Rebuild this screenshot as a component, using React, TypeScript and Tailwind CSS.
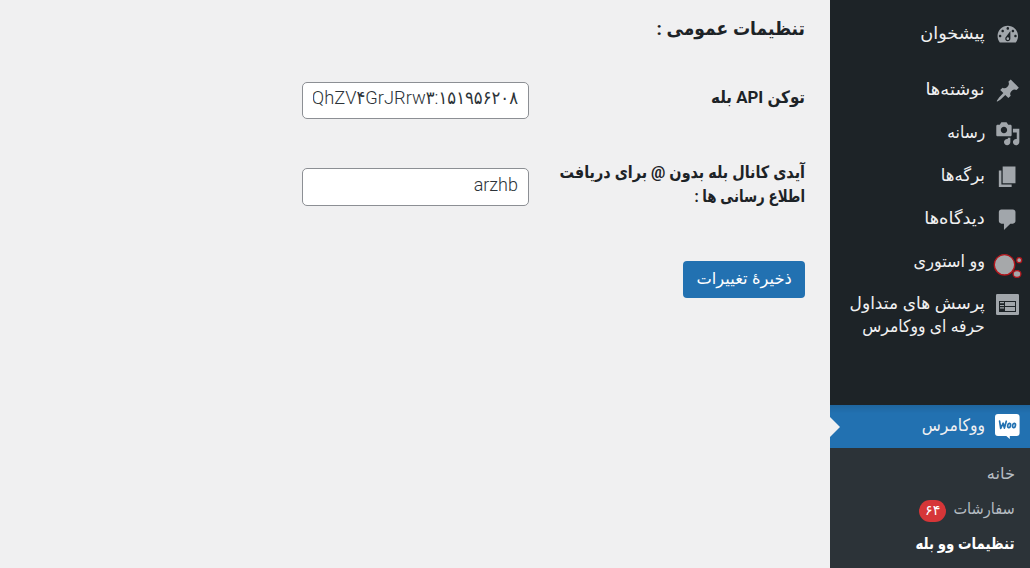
import type { ReactNode } from "react";

const textFont = "font-[Roboto,'DejaVu_Sans_Condensed',sans-serif]";

function Dash({ d }: { d: string }) {
  return (
    <svg viewBox="0 0 20 20" className="size-[25.6px]" fill="#a1a6ab">
      <path d={d} />
    </svg>
  );
}

const DASHBOARD =
  "M3.76 16h12.48c1.1-1.37 1.76-3.11 1.76-5 0-4.42-3.58-8-8-8s-8 3.58-8 8c0 1.89.66 3.63 1.76 5zM10 4c.55 0 1 .45 1 1s-.45 1-1 1-1-.45-1-1 .45-1 1-1zM6 6c.55 0 1 .45 1 1s-.45 1-1 1-1-.45-1-1 .45-1 1-1zm8 0c.55 0 1 .45 1 1s-.45 1-1 1-1-.45-1-1 .45-1 1-1zm-5.37 5.55L12 7v6c0 1.1-.9 2-2 2s-2-.9-2-2c0-.57.24-1.08.63-1.45zM4 10c.55 0 1 .45 1 1s-.45 1-1 1-1-.45-1-1 .45-1 1-1zm12 0c.55 0 1 .45 1 1s-.45 1-1 1-1-.45-1-1 .45-1 1-1zm-5 3c0-.55-.45-1-1-1s-1 .45-1 1 .45 1 1 1 1-.45 1-1z";
const PIN =
  "M10.44 3.02l1.82-1.82 6.36 6.35-1.83 1.82c-1.05-.68-2.48-.57-3.41.36l-.75.75c-.92.93-1.04 2.35-.35 3.41l-1.83 1.82-2.41-2.41-2.8 2.79c-.42.42-3.38 2.71-3.8 2.29s1.86-3.39 2.28-3.81l2.79-2.79L4.1 9.36l1.83-1.82c1.05.69 2.48.57 3.4-.36l.75-.75c.93-.92 1.05-2.35.36-3.41z";
const MEDIA =
  "M13 11V4c0-.55-.45-1-1-1h-1.67L9 1H5L3.67 3H2c-.55 0-1 .45-1 1v7c0 .55.45 1 1 1h10c.55 0 1-.45 1-1zM7 4.5c1.38 0 2.5 1.12 2.5 2.5S8.38 9.5 7 9.5 4.5 8.38 4.5 7 5.62 4.5 7 4.5zM14 6h5v10.5c0 1.38-1.12 2.5-2.5 2.5S14 17.88 14 16.5s1.12-2.5 2.5-2.5c.17 0 .34.02.5.05V9h-3V6zm-4 8.05V13h2v3.5c0 1.38-1.12 2.5-2.5 2.5S7 17.88 7 16.5 8.12 14 9.5 14c.17 0 .34.02.5.05z";
const PAGES = "M6 15V2h10v13H6zm-1 1h8v2H3V5h2v11z";
const COMMENTS = "M5 2h9c1.1 0 2 .9 2 2v7c0 1.1-.9 2-2 2h-2l-5 5v-5H5c-1.1 0-2-.9-2-2V4c0-1.1.9-2 2-2z";

function StoryIcon() {
  return (
    <svg viewBox="0 0 30 30" className="size-[30px] shrink-0" fill="#a6a8aa" stroke="#b3151b" strokeWidth="1.3">
      <circle cx="11.5" cy="16.8" r="10.2" />
      <circle cx="26.2" cy="12.2" r="2.5" />
      <ellipse cx="24" cy="26" rx="3.9" ry="3.4" />
    </svg>
  );
}

function FaqIcon() {
  return (
    <svg viewBox="0 0 23 21" className="h-[21px] w-[23px]">
      <rect width="23" height="21" rx="1.2" fill="#a1a6ab" />
      <path fill="#1d2327" d="M3 7h17v11H3z" />
      <path fill="#a1a6ab" d="M4 8h4v1.2H4zM9 8h10v4H9zM4 11h4v1H4zM4 13.2h4v1.2H4zM9 13h10v4H9z" />
    </svg>
  );
}

function WooIcon() {
  return (
    <svg viewBox="0 0 24.6 26" className="h-[26px] w-[24.6px]">
      <path fill="#fff" d="M3 0h18.6a3 3 0 0 1 3 3v16a3 3 0 0 1-3 3h-6.8v3l-3.5-3H3a3 3 0 0 1-3-3V3a3 3 0 0 1 3-3z" />
      <g fill="none" stroke="#2271b1" strokeWidth="1.7" strokeLinecap="round" strokeLinejoin="round">
        <path d="M4.6 7.2 5.7 14.3 8.2 9.2 9.4 14.1 11.3 7.2" />
        <ellipse cx="14.1" cy="11.5" rx="1.4" ry="2.2" transform="rotate(12 14.1 11.5)" />
        <ellipse cx="19" cy="11.5" rx="1.4" ry="2.2" transform="rotate(12 19 11.5)" />
      </g>
    </svg>
  );
}

function MenuRow({ icon, label, scale, className = "" }: { icon: ReactNode; label: string; scale: string; className?: string }) {
  return (
    <li className={`flex h-[43px] items-center gap-[9px] pr-[9px] ${className}`}>
      <span className="flex w-[27px] shrink-0 justify-center">{icon}</span>
      <span className={`block origin-right whitespace-nowrap pb-1 text-[17px] leading-6 text-[#f0f0f1] ${scale}`}>{label}</span>
    </li>
  );
}

function Sidebar() {
  return (
    <nav className="flex w-[200px] shrink-0 flex-col bg-[#1d2327]">
      <ul className="pt-[13px]">
        <MenuRow icon={<Dash d={DASHBOARD} />} label="پیشخوان" scale="scale-x-[1.155]" />
        <MenuRow className="mt-[13px]" icon={<Dash d={PIN} />} label="نوشته‌ها" scale="scale-x-[1.17]" />
        <MenuRow icon={<Dash d={MEDIA} />} label="رسانه" scale="scale-x-[1.02]" />
        <MenuRow icon={<Dash d={PAGES} />} label="برگه‌ها" scale="scale-x-[1.08]" />
        <MenuRow icon={<Dash d={COMMENTS} />} label="دیدگاه‌ها" scale="scale-x-[1.17]" />
        <MenuRow icon={<StoryIcon />} label="وو استوری" scale="scale-x-[1.05]" />
        <li className="flex h-[64px] items-start gap-[9px] pt-[8px] pr-[9px] text-[17px] leading-[23px] text-[#f0f0f1]">
          <span className="flex w-[27px] shrink-0 justify-center pt-[2px]"><FaqIcon /></span>
          <span className="flex flex-col whitespace-nowrap">
            <span className="origin-right scale-x-[1.11]">پرسش های متداول</span>
            <span className="origin-right scale-x-[1.02]">حرفه ای ووکامرس</span>
          </span>
        </li>
      </ul>
      <div className="mt-[57px] flex h-[43px] items-center bg-[#2271b1] bg-linear-to-b from-black/10 to-transparent to-20%">
        <ul className="flex-1">
          <MenuRow icon={<WooIcon />} label="ووکامرس" scale="scale-x-[1.02]" />
        </ul>
        <svg viewBox="0 0 10 20" className="h-5 w-2.5" fill="#f0f0f1"><path d="M0 0 10 10 0 20z" /></svg>
      </div>
      <ul className="flex flex-1 flex-col bg-[#2c3338] pt-[7px] pr-[15px] text-[16px] text-[#b5bcc2]">
        <li className="flex h-[36px] items-center pt-[2px]"><span className="origin-right scale-x-[1.13]">خانه</span></li>
        <li className="flex h-[36px] items-center gap-[8px]">
          <span className="origin-right scale-x-[1.01]">سفارشات</span>
          <span className="mt-[3px] flex h-[22px] w-[27px] items-center justify-center rounded-full bg-[#d63638] text-[14px] text-white"><span className="scale-x-[1.13]">۶۴</span></span>
        </li>
        <li className="flex h-[35px] items-center pb-px font-bold text-white"><span className="origin-right scale-x-[.93] whitespace-nowrap">تنظیمات وو بله</span></li>
      </ul>
    </nav>
  );
}

const inputClass =
  "block w-[227px] rounded-[5px] border border-[#8c8f94] bg-white px-[10px] pb-[6px] font-light text-[#2c3338] outline-none";

export default function App() {
  return (
    <div dir="rtl" className={`flex h-[568px] w-[1030px] overflow-hidden bg-[#f0f0f1] ${textFont}`}>
      <Sidebar />
      <main className="flex-1 pr-[25px] text-[#1d2327]">
        <h2 className="pt-[14px] text-[19px] leading-[30px] font-bold">تنظیمات عمومی :</h2>
        <form>
          <div className="mt-[38px] flex h-[37px]">
            <label className="w-[276px] pt-[3px] text-[17px] leading-6 font-bold"><span className="inline-block origin-right scale-x-[.99]">توکن API بله</span></label>
            <input className={`${inputClass} h-[37px] text-[18.3px]`} defaultValue="QhZV۴GrJRrw۳:۱۵۱۹۵۶۲۰۸" />
          </div>
          <div className="mt-[41px] flex h-[46px]">
            <label className="flex w-[276px] flex-col text-[17px] leading-6 font-bold whitespace-nowrap">
              <span className="origin-right scale-x-[.94]">آیدی کانال بله بدون @ برای دریافت</span>
              <span className="origin-right scale-x-[.875]">اطلاع رسانی ها :</span>
            </label>
            <input className={`${inputClass} mt-[8px] h-[38px] text-[18px]`} defaultValue="arzhb" />
          </div>
          <button type="button" className="mt-[55px] flex h-[37px] w-[122px] items-center justify-center rounded-[4px] bg-[#2271b1] pb-[2px] text-[16px] text-white">
            <span className="scale-x-[1.13]">ذخیرهٔ تغییرات</span>
          </button>
        </form>
      </main>
    </div>
  );
}
